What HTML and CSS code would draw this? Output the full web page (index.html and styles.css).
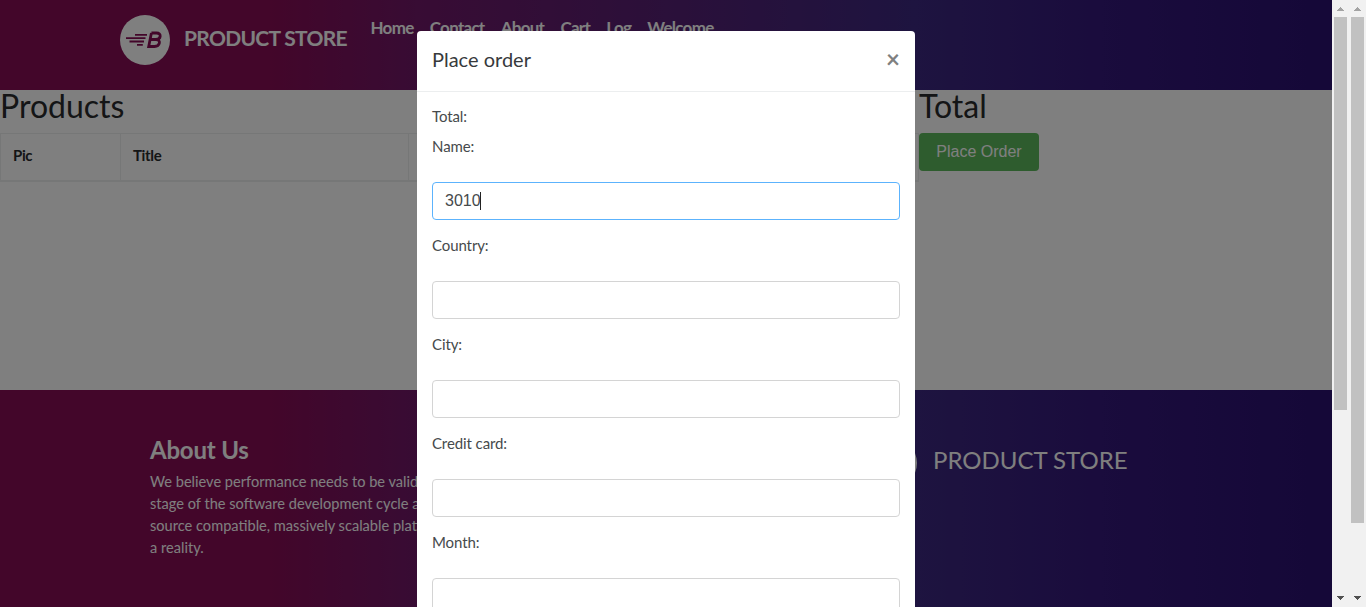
FILE: index.html
```html
<!DOCTYPE html>
<html lang="en">
<head>
<meta charset="utf-8">
<title>STORE</title>
<link rel="stylesheet" href="styles.css">
</head>
<body>
<div class="window">
  <div class="page">
    <header class="navbar">
      <div class="brand">
        <svg class="logo" viewBox="0 0 50 50">
          <circle cx="25" cy="25" r="25" fill="#fff"/>
          <g stroke="#870c54" stroke-width="1.8" fill="none">
            <path d="M15 19.8H27M6 23.1H25.5M9.5 26.5H24M17 29.8H22.8"/>
            <path stroke-width="2.8" d="M31.4 18H36.5C42 18 41 24.5 36 24.5H30.2H36C41.5 24.5 40 31.5 34.5 31.5H28.7L31.4 18"/>
          </g>
        </svg>
        <span class="brand-name">PRODUCT STORE</span>
      </div>
      <nav class="links">
        <a>Home</a><a>Contact</a><a>About</a><a>Cart</a><a>Log</a><a>Welcome</a>
      </nav>
    </header>
    <main class="content">
      <section class="products">
        <h2 class="heading">Products</h2>
        <div class="table-head"><span class="cell">Pic</span><span class="cell">Title</span><span class="cell"></span></div>
      </section>
      <section class="summary">
        <h2 class="heading">Total</h2>
        <button class="order">Place Order</button>
      </section>
    </main>
    <footer class="footer">
      <div class="about">
        <h4 class="about-title">About Us</h4>
        <p class="about-text">We believe performance needs to be validated at every<br>stage of the software development cycle and our open<br>source compatible, massively scalable platform makes that<br>a reality.</p>
      </div>
      <div class="footer-brand">
        <svg class="logo" viewBox="0 0 50 50"><circle cx="25" cy="25" r="25" fill="#fff"/></svg>
        <span class="footer-name">PRODUCT STORE</span>
      </div>
    </footer>
  </div>
  <div class="backdrop"></div>
  <div class="modal">
    <div class="modal-header"><h5 class="modal-title">Place order</h5><span class="close">×</span></div>
    <form class="modal-body">
      <label class="label">Total:</label>
      <label class="label">Name:</label>
      <div class="field focused">3010<i class="caret"></i></div>
      <label class="label">Country:</label>
      <div class="field"></div>
      <label class="label">City:</label>
      <div class="field"></div>
      <label class="label">Credit card:</label>
      <div class="field"></div>
      <label class="label">Month:</label>
      <div class="field"></div>
    </form>
  </div>
  <div class="scrollbars">
    <div class="track">
      <svg class="arrow" viewBox="0 0 7 4"><path fill="#a3a3a3" d="M3 0h1v1h1v1h1v1h1v1H0V3h1V2h1V1h1z"/></svg>
      <div class="thumb thumb-inner"></div>
      <svg class="arrow down" viewBox="0 0 7 4"><path fill="#505050" d="M0 0h7v1H6v1H5v1H4v1H3V3H2V2H1V1H0z"/></svg>
    </div>
    <div class="track">
      <svg class="arrow" viewBox="0 0 7 4"><path fill="#a3a3a3" d="M3 0h1v1h1v1h1v1h1v1H0V3h1V2h1V1h1z"/></svg>
      <div class="thumb thumb-outer"></div>
      <svg class="arrow down" viewBox="0 0 7 4"><path fill="#505050" d="M0 0h7v1H6v1H5v1H4v1H3V3H2V2H1V1H0z"/></svg>
    </div>
  </div>
</div>
</body>
</html>
```
FILE: styles.css
```css
* { box-sizing: border-box; }
body { margin: 0; overflow: hidden; font-family: Lato, "Liberation Sans", sans-serif; color: #292b2c; }
h2, h4, h5, p { margin: 0; }
.window { position: relative; width: 1366px; height: 607px; overflow: hidden; display: flex; }
.page { width: 1332px; display: flex; flex-direction: column; }
.navbar, .footer { background: linear-gradient(90deg, #860c54 0, #860c54 270px, #701868 417px, #3c2880 915px, #34187a 1100px, #2a1070 1332px); color: #fff; }
.navbar { height: 90px; display: flex; padding: 15px 0 0 120px; }
.brand { display: flex; gap: 14px; height: 50px; width: 250.5px; }
.logo { width: 50px; height: 50px; flex: none; }
.brand-name { font-size: 21px; font-weight: 700; line-height: 45px; letter-spacing: -0.7px; white-space: nowrap; }
.links { display: flex; gap: 16.2px; font-size: 17px; font-weight: 700; line-height: 25px; letter-spacing: -0.72px; }
.content { height: 300px; display: flex; }
.products { width: 919px; }
.heading { font-size: 32px; font-weight: 400; line-height: 31px; height: 43px; }
.table-head { display: grid; grid-template-columns: 120px 288px 1fr; height: 49px; border: 1px solid #eceeef; border-bottom-width: 2px; }
.cell { padding: 9px 12px; font-size: 15px; line-height: 24px; font-weight: 700; letter-spacing: -0.35px; border-right: 1px solid #eceeef; }
.cell:last-child { border-right: 0; }
.order { display: block; width: 120px; height: 38px; border: 0; border-radius: 4px; background: #5cb85c; color: #fff; font: 16px "Liberation Sans", sans-serif; padding: 0; }
.footer { flex: 1; display: flex; }
.about { width: 762px; padding: 45px 0 0 150px; }
.about-title { font-size: 24px; line-height: 29px; font-weight: 700; letter-spacing: -0.2px; }
.about-text { margin-top: 7px; font-size: 14.6px; line-height: 22px; white-space: nowrap; }
.footer-brand { display: flex; gap: 16px; padding-top: 48px; margin-left: 105px; }
.footer-name { font-size: 24px; line-height: 44px; white-space: nowrap; }
.backdrop { position: absolute; inset: 0; background: rgba(0,0,0,.5); }
.modal { position: absolute; left: 417px; top: 31px; width: 498px; height: 720px; background: #fff; border-radius: 4px; }
.modal-header { height: 61px; padding: 13px 15px; display: flex; justify-content: space-between; border-bottom: 1px solid #eceeef; }
.modal-title { font-size: 20px; line-height: 30px; font-weight: 400; color: #373a3c; }
.close { font: 700 24px/30px Lato, sans-serif; color: #808080; }
.modal-body { padding: 13px 15px; display: flex; flex-direction: column; }
.label { height: 30px; font-size: 15px; line-height: 22px; letter-spacing: -0.1px; color: #464a4c; }
.field { height: 38px; margin: 17px 0 14px; padding: 0 12px; border: 1px solid #d4d4d4; border-radius: 4px; display: flex; align-items: center; font: 16px "Liberation Sans", sans-serif; color: #464a4c; }
.focused { border-color: #5cb3fd; }
.caret { width: 1px; height: 18px; margin-left: -1px; background: #222; }
.scrollbars { position: relative; width: 34px; display: flex; background: #f1f1f1; }
.track { width: 17px; padding: 7px 2px 7px; display: flex; flex-direction: column; align-items: center; }
.arrow { width: 7px; height: 4px; flex: none; }
.down { margin-top: auto; }
.thumb { width: 13px; margin-top: 6px; background: #c1c1c1; }
.thumb-inner { height: 393px; }
.thumb-outer { height: 506px; }
```
